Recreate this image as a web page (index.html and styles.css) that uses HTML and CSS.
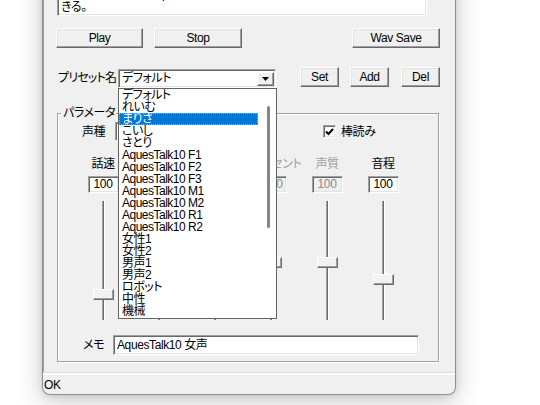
FILE: index.html
```html
<!DOCTYPE html>
<html lang="ja">
<head>
<meta charset="utf-8">
<title>AquesTalk Player</title>
<link rel="stylesheet" href="styles.css">
</head>
<body>
<div class="desk">
  <div class="win">
    <div class="client">
      <div class="edit top-edit">
        <div class="tline">音声合成エンジンAquesTalk10を使って、テキストを読み上げることがで</div>
        <div class="tline">きる。</div>
      </div>

      <div class="row btn-row">
        <div class="btn b-play">Play</div>
        <div class="btn b-stop">Stop</div>
        <div class="btn b-wav">Wav Save</div>
      </div>

      <div class="row preset-row">
        <div class="plabel">プリセット名</div>
        <div class="combo preset-combo">
          <span class="ctext">デフォルト</span>
          <div class="cbtn"><svg width="7" height="4" viewBox="0 0 7 4"><path d="M0 0h7L3.5 4z" fill="#000"/></svg></div>
          <div class="list">
            <div class="items">
              <div class="item">デフォルト</div>
              <div class="item">れいむ</div>
              <div class="item sel">まりさ</div>
              <div class="item">こいし</div>
              <div class="item">さとり</div>
              <div class="item">AquesTalk10 F1</div>
              <div class="item">AquesTalk10 F2</div>
              <div class="item">AquesTalk10 F3</div>
              <div class="item">AquesTalk10 M1</div>
              <div class="item">AquesTalk10 M2</div>
              <div class="item">AquesTalk10 R1</div>
              <div class="item">AquesTalk10 R2</div>
              <div class="item">女性1</div>
              <div class="item">女性2</div>
              <div class="item">男声1</div>
              <div class="item">男声2</div>
              <div class="item">ロボット</div>
              <div class="item">中性</div>
              <div class="item">機械</div>
            </div>
            <div class="sthumb"></div>
          </div>
        </div>
        <div class="btn b-small b-set">Set</div>
        <div class="btn b-small b-add">Add</div>
        <div class="btn b-small b-del">Del</div>
      </div>

      <div class="group">
        <span class="gtitle">パラメータ</span>
        <div class="row voice-row">
          <div class="vlabel">声種</div>
          <div class="combo voice-combo"></div>
          <div class="check"><svg width="9" height="8" viewBox="0 0 9 8"><path d="M1 3.5l2.5 2.5L8 1" fill="none" stroke="#000" stroke-width="2"/></svg></div>
          <div class="clabel-check">棒読み</div>
        </div>

        <div class="sliders">
          <div class="col">
            <div class="slabel">話速</div>
            <div class="num">100</div>
            <div class="track"><div class="thumb" style="top:88px"></div></div>
          </div>
          <div class="col">
            <div class="slabel"></div>
            <div class="num"></div>
            <div class="track"><div class="thumb" style="top:56px"></div></div>
          </div>
          <div class="col">
            <div class="slabel"></div>
            <div class="num"></div>
            <div class="track"><div class="thumb" style="top:56px"></div></div>
          </div>
          <div class="col off">
            <div class="slabel acc">アクセント</div>
            <div class="num acc-num">100</div>
            <div class="track"><div class="thumb" style="top:56px"></div></div>
          </div>
          <div class="col off">
            <div class="slabel">声質</div>
            <div class="num">100</div>
            <div class="track"><div class="thumb" style="top:56px"></div></div>
          </div>
          <div class="col">
            <div class="slabel">音程</div>
            <div class="num">100</div>
            <div class="track"><div class="thumb" style="top:73px"></div></div>
          </div>
        </div>

        <div class="row memo-row">
          <div class="mlabel">メモ</div>
          <div class="edit memo-edit">AquesTalk10 女声</div>
        </div>
      </div>
    </div>
    <div class="status">OK</div>
  </div>
</div>
</body>
</html>
```

FILE: styles.css
```css
html, body {
  margin: 0;
  padding: 0;
  background: #fff;
}
body {
  font-family: "Liberation Sans", "Noto Sans CJK JP", sans-serif;
  font-size: 12px;
  letter-spacing: -0.4px;
  font-feature-settings: "palt" 1;
  color: #000;
}
.desk {
  position: relative;
  width: 540px;
  height: 405px;
  overflow: hidden;
  background: #fff;
}
.win {
  position: absolute;
  left: 42px;
  top: -40px;
  width: 414px;
  height: 435px;
  box-sizing: border-box;
  background: #f0f0f0;
  border: 1px solid #8e8e8e;
  border-top: none;
  border-radius: 0 0 8px 8px;
  box-shadow: 0 6px 26px rgba(0, 0, 0, 0.22), 0 1px 6px rgba(0, 0, 0, 0.10);
  display: flex;
  flex-direction: column;
  overflow: hidden;
}
.client {
  flex: 1;
  display: flex;
  flex-direction: column;
  box-shadow: inset 1px 0 0 #a0a0a0;
}
.row {
  display: flex;
  align-items: center;
}

/* sunken edit */
.edit, .combo, .num, .check {
  box-sizing: border-box;
  background: #fff;
  border: 1px solid;
  border-color: #a0a0a0 #fff #fff #a0a0a0;
  box-shadow: inset 1px 1px 0 #696969, inset -1px -1px 0 #e3e3e3;
}
.top-edit {
  margin: 10px 0 0 14px;
  width: 370px;
  height: 46px;
  padding: 17px 0 0 3px;
}
.tline {
  line-height: 13px;
  height: 13px;
  white-space: nowrap;
  overflow: hidden;
}

/* raised buttons */
.btn {
  box-sizing: border-box;
  height: 20px;
  display: flex;
  align-items: center;
  justify-content: center;
  background: #f0f0f0;
  border: 1px solid;
  border-color: #fff #696969 #696969 #fff;
  box-shadow: inset -1px -1px 0 #a0a0a0, inset 1px 1px 0 #e3e3e3;
  line-height: 14px;
}
.btn-row {
  margin-top: 12px;
}
.b-play { margin-left: 13px; width: 87px; }
.b-stop { margin-left: 11px; width: 88px; }
.b-wav { margin-left: auto; margin-right: 15px; width: 88px; }

.preset-row {
  margin-top: 19px;
  height: 20px;
  align-items: flex-start;
}
.plabel {
  margin-left: 15px;
  width: 60px;
  line-height: 14px;
  margin-top: 4px;
  white-space: nowrap;
  letter-spacing: -0.8px;
}
.combo {
  position: relative;
  height: 19px;
  padding: 1px 0 0 3px;
  line-height: 15px;
}
.preset-combo {
  width: 158px;
  margin-top: 2px;
  z-index: 2;
}
.cbtn {
  position: absolute;
  right: 1px;
  top: 2px;
  width: 17px;
  height: 14px;
  box-sizing: border-box;
  background: #f0f0f0;
  border: 1px solid;
  border-color: #fff #696969 #696969 #fff;
  box-shadow: inset -1px -1px 0 #a0a0a0;
  display: flex;
  align-items: center;
  justify-content: center;
}
.list {
  position: absolute;
  left: -1px;
  top: 18px;
  width: 159px;
  height: 231px;
  box-sizing: border-box;
  background: #fff;
  border: 1px solid #646464;
  letter-spacing: -0.5px;
}
.items {
  width: 139px;
}
.item {
  height: 12px;
  line-height: 12px;
  padding-left: 3px;
  white-space: nowrap;
}
.item.sel {
  background: #0078d7;
  color: #fff;
  outline: 1px dotted #7fb6e6;
  outline-offset: -1px;
}
.sthumb {
  position: absolute;
  left: 148px;
  top: 17px;
  width: 3px;
  height: 122px;
  border-radius: 2px;
  background: #858585;
}
.b-small { width: 39px; }
.b-set { margin-left: 24px; }
.b-add { margin-left: 11px; }
.b-del { margin-left: 12px; }

/* group box */
.group {
  position: relative;
  margin: 26px 0 0 14px;
  width: 382px;
  height: 249px;
  box-sizing: border-box;
  border: 1px solid #a0a0a0;
  box-shadow: inset 1px 1px 0 #fff, 1px 1px 0 #fff;
  display: flex;
  flex-direction: column;
}
.gtitle {
  position: absolute;
  left: 3px;
  top: -8px;
  padding: 0 1px 0 2px;
  background: #f0f0f0;
  line-height: 14px;
}
.voice-row {
  margin-top: 8px;
  height: 19px;
}
.vlabel {
  margin-left: 24px;
  width: 33px;
  line-height: 14px;
}
.voice-combo {
  width: 154px;
}
.check {
  margin-left: 54px;
  width: 13px;
  height: 13px;
  display: flex;
  align-items: center;
  justify-content: center;
}
.clabel-check {
  margin-left: 5px;
  line-height: 14px;
}

.sliders {
  margin: 16px 0 0 17px;
  display: grid;
  grid-template-columns: repeat(6, 56px);
}
.col {
  display: flex;
  flex-direction: column;
  align-items: center;
}
.slabel {
  height: 14px;
  line-height: 14px;
  white-space: nowrap;
}
.slabel.acc {
  padding-left: 10px;
}
.num {
  margin-top: 5px;
  width: 31px;
  height: 17px;
  text-align: center;
  line-height: 15px;
}
.num.acc-num {
  text-align: right;
  padding-right: 3px;
}
.col.off .slabel { color: #a0a0a0; }
.col.off .num {
  background: #f0f0f0;
  color: #8a8a8a;
}
.track {
  position: relative;
  margin-top: 8px;
  width: 3px;
  height: 119px;
  box-sizing: border-box;
  border-left: 1px solid #a0a0a0;
  border-right: 1px solid #fff;
  background: #6d6d6d;
}
.thumb {
  position: absolute;
  left: -10px;
  width: 21px;
  height: 11px;
  box-sizing: border-box;
  background: #f2f2f2;
  border: 1px solid;
  border-color: #fff #696969 #696969 #fff;
  box-shadow: inset -1px -1px 0 #a0a0a0;
}

.memo-row {
  margin-top: 15px;
  height: 20px;
}
.mlabel {
  margin-left: 25px;
  width: 30px;
  line-height: 14px;
}
.memo-edit {
  width: 306px;
  height: 20px;
  padding: 2px 0 0 3px;
  line-height: 14px;
}

.status {
  height: 21px;
  box-sizing: border-box;
  border-top: 1px solid #fff;
  box-shadow: inset 0 1px 0 #fff, 0 -1px 0 #dcdcdc;
  padding: 4px 0 0 1px;
  line-height: 14px;
}
```
